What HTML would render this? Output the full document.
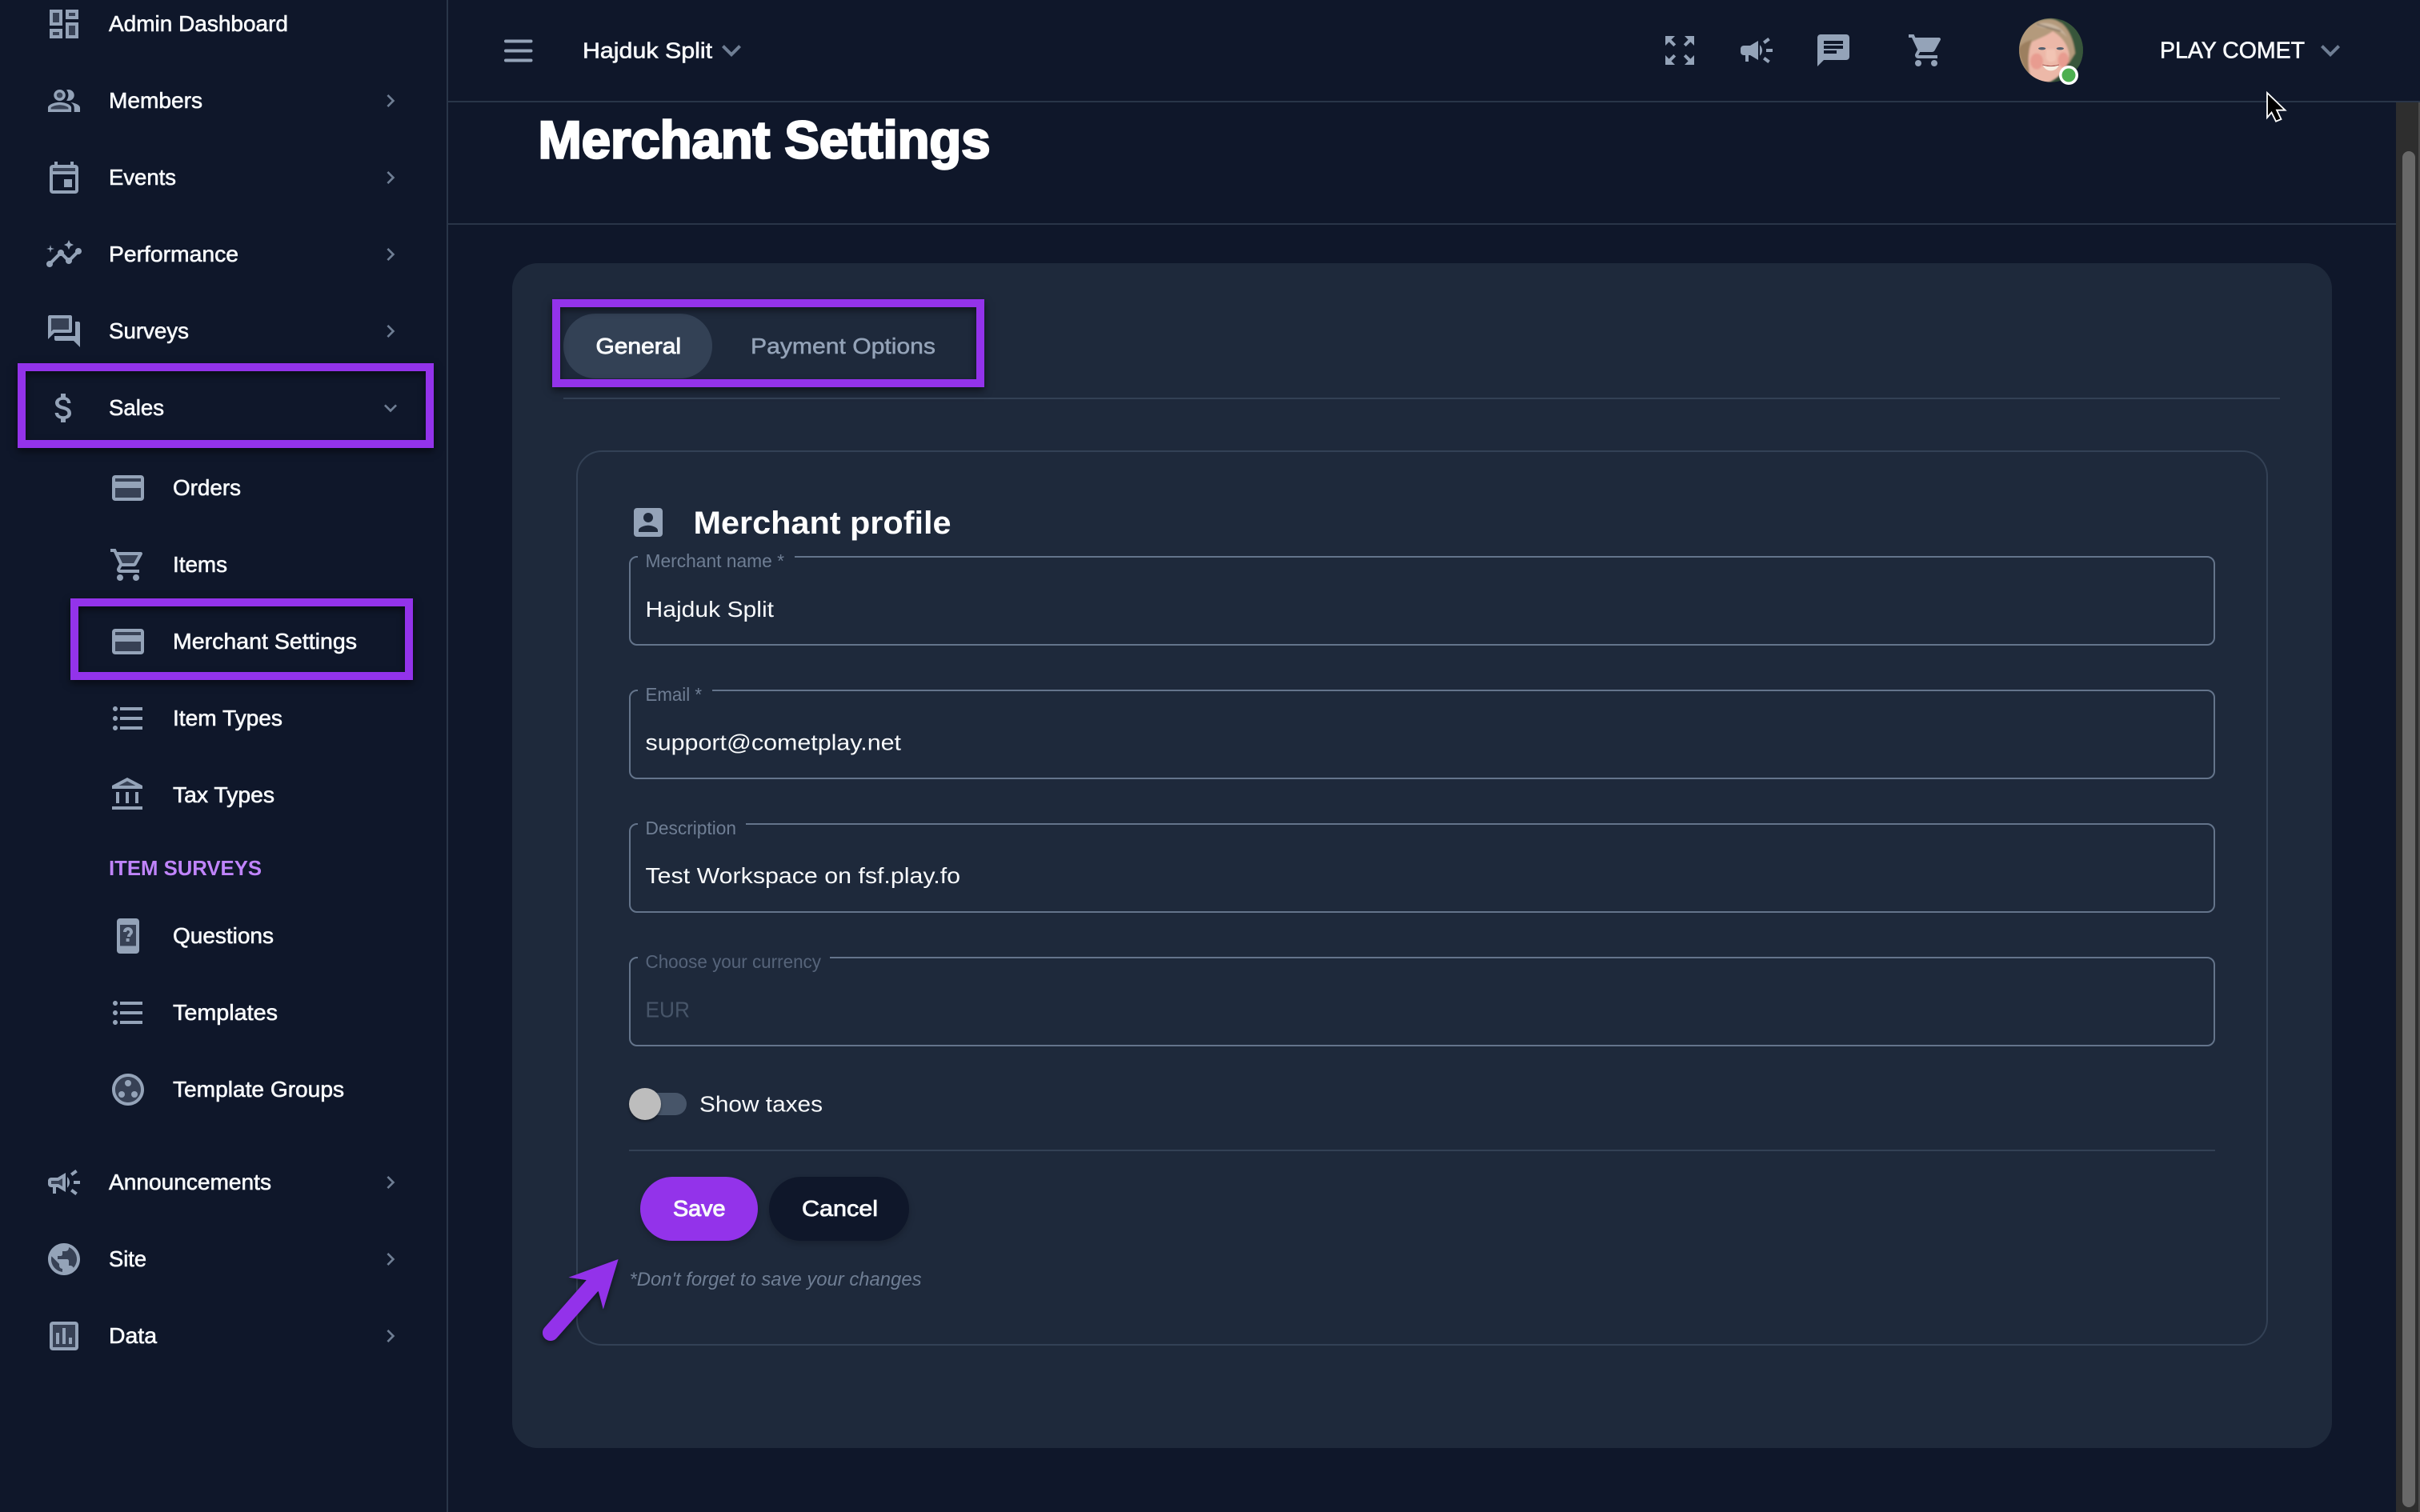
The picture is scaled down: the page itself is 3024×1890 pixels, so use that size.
<!DOCTYPE html>
<html lang="en">
<head>
<meta charset="utf-8">
<title>Merchant Settings</title>
<style>
html,body{margin:0;padding:0;width:3024px;height:1890px;overflow:hidden;background:#0f172a;font-family:"Liberation Sans",sans-serif}
.a{position:absolute;box-sizing:border-box}
svg{position:absolute;left:0;top:0}
text{font-family:"Liberation Sans",sans-serif}
.m{fill:#f8fafc;stroke:#f8fafc;stroke-width:.6;font-size:28px}
.ic{fill:#94a3b8}
.o3{opacity:.3}
.ch{fill:#6f7e94}
.hl{border:10px solid #9333ea;box-shadow:0 4px 9px rgba(0,0,0,.55),inset 0 4px 9px rgba(0,0,0,.5)}
.fld{border:2px solid #64748b;border-radius:10px;left:786px;width:1982px;height:112px}
.gap{background:#1e293b;height:4px;top:-3px}
</style>
</head>
<body>
<!-- sidebar / header chrome -->
<div class="a" style="left:558px;top:0;width:2px;height:1890px;background:#293548"></div>
<div class="a" style="left:560px;top:126px;width:2464px;height:2px;background:#293548"></div>
<div class="a" style="left:560px;top:279px;width:2434px;height:2px;background:#293548"></div>
<!-- scrollbar -->
<div class="a" style="left:2994px;top:128px;width:30px;height:1762px;background:#2e2e2e;border-right:2px solid #4a4a4a"></div>
<div class="a" style="left:3002px;top:189px;width:16px;height:1695px;background:#686868;border-radius:8px"></div>
<!-- card -->
<div class="a" style="left:640px;top:329px;width:2274px;height:1481px;background:#1e293b;border-radius:32px"></div>
<div class="a" style="left:704px;top:392px;width:186px;height:81px;background:#334155;border-radius:40px"></div>
<div class="a" style="left:704px;top:497px;width:2145px;height:2px;background:#334155"></div>
<div class="a" style="left:720px;top:563px;width:2114px;height:1119px;border:2px solid #334155;border-radius:32px"></div>
<!-- fields -->
<div class="a fld" style="top:695px"><div class="a gap" style="left:9px;width:196px"></div></div>
<div class="a fld" style="top:862px"><div class="a gap" style="left:9px;width:93px"></div></div>
<div class="a fld" style="top:1029px"><div class="a gap" style="left:9px;width:135px"></div></div>
<div class="a fld" style="top:1196px"><div class="a gap" style="left:9px;width:240px"></div></div>
<!-- toggle -->
<div class="a" style="left:792px;top:1366px;width:66px;height:28px;background:#475569;border-radius:14px"></div>
<div class="a" style="left:786px;top:1360px;width:40px;height:40px;background:#bdbdbd;border-radius:50%;box-shadow:0 2px 3px rgba(0,0,0,.4)"></div>
<div class="a" style="left:786px;top:1437px;width:1982px;height:2px;background:#334155"></div>
<!-- buttons -->
<div class="a" style="left:800px;top:1471px;width:147px;height:80px;background:#9333ea;border-radius:40px;box-shadow:0 4px 8px rgba(0,0,0,.2)"></div>
<div class="a" style="left:961px;top:1471px;width:175px;height:80px;background:#0f172a;border-radius:40px;box-shadow:0 4px 8px rgba(0,0,0,.2)"></div>
<!-- highlight boxes -->
<div class="a hl" style="left:22px;top:454px;width:520px;height:106px"></div>
<div class="a hl" style="left:88px;top:748px;width:428px;height:102px"></div>
<div class="a hl" style="left:690px;top:374px;width:540px;height:110px"></div>

<svg width="3024" height="1890" viewBox="0 0 3024 1890" xmlns="http://www.w3.org/2000/svg">
<defs>
<path id="cr" d="M10 6 8.59 7.41 13.17 12l-4.58 4.59L10 18l6-6z"/>
<path id="ex" d="M16.59 8.59 12 13.17 7.41 8.59 6 10l6 6 6-6z"/>
<g id="card"><path class="o3" d="M4 12h16v6H4zM4 6h16v2H4z"/><path fill-rule="evenodd" d="M20 4H4c-1.11 0-1.99.89-1.99 2L2 18c0 1.11.89 2 2 2h16c1.11 0 2-.9 2-2V6c0-1.11-.89-2-2-2zm0 14H4v-6h16v6zm0-10H4V6h16v2z"/></g>
<path id="lst" d="M4 10.5c-.83 0-1.5.67-1.5 1.5s.67 1.5 1.5 1.5 1.5-.67 1.5-1.5-.67-1.5-1.5-1.5zm0-6c-.83 0-1.5.67-1.5 1.5S3.17 7.5 4 7.5 5.5 6.83 5.5 6 4.83 4.5 4 4.5zm0 12c-.83 0-1.5.68-1.5 1.5s.68 1.5 1.5 1.5 1.5-.68 1.5-1.5-.67-1.5-1.5-1.5zM7 19h14v-2H7v2zm0-6h14v-2H7v2zm0-8v2h14V5H7z"/>
<clipPath id="av"><circle cx="2563" cy="62.7" r="40"/></clipPath>
<filter id="bl" x="-20%" y="-20%" width="140%" height="140%"><feGaussianBlur stdDeviation="3"/></filter>
<filter id="ds" x="-30%" y="-30%" width="160%" height="160%"><feDropShadow dx="0" dy="3" stdDeviation="4" flood-color="#000" flood-opacity=".5"/></filter>
</defs>

<!-- sidebar icons -->
<g class="ic">
<g transform="translate(56,6) scale(2)"><path class="o3" d="M5 5h4v6H5zm10 8h4v6h-4zM5 17h4v2H5zM15 5h4v2h-4z"/><path d="M3 13h8V3H3v10zm2-8h4v6H5V5zm8 16h8V11h-8v10zm2-8h4v6h-4v-6zM13 3v6h8V3h-8zm6 4h-4V5h4v2zM3 21h8v-6H3v6zm2-4h4v2H5v-2z"/></g>
<g transform="translate(80,126) scale(1.82,1.75) translate(-12,-12)"><path class="o3" d="M9 8m-2 0a2 2 0 1 0 4 0 2 2 0 1 0-4 0M9 15c-2.7 0-5.8 1.29-6 2.01V18h12v-1c-.2-.71-3.3-2-6-2z"/><path d="M16.67 13.13C18.04 14.06 19 15.32 19 17v3h4v-3c0-2.18-3.57-3.47-6.33-3.87zM15 12c2.21 0 4-1.79 4-4s-1.79-4-4-4c-.47 0-.91.1-1.33.24C14.5 5.27 15 6.58 15 8s-.5 2.73-1.33 3.76c.42.14.86.24 1.33.24zM9 12c2.21 0 4-1.79 4-4s-1.79-4-4-4-4 1.79-4 4 1.79 4 4 4zm0-6c1.1 0 2 .9 2 2s-.9 2-2 2-2-.9-2-2 .9-2 2-2zM9 13c-2.67 0-8 1.34-8 4v3h16v-3c0-2.66-5.33-4-8-4zm6 5H3v-.99C3.2 16.29 6.3 15 9 15s5.8 1.29 6 2v1z"/></g>
<g transform="translate(56,200) scale(2)"><path class="o3" d="M5 5h14v2H5z"/><path d="M19 3h-1V1h-2v2H8V1H6v2H5c-1.1 0-2 .9-2 2v14c0 1.1.9 2 2 2h14c1.1 0 2-.9 2-2V5c0-1.1-.9-2-2-2zm0 16H5V9h14v10zm0-12H5V5h14v2zm-7 5h5v5h-5z"/></g>
<g transform="translate(56,294) scale(2)"><path d="M21 8c-1.45 0-2.26 1.44-1.93 2.51l-3.55 3.56c-.3-.09-.74-.09-1.04 0l-2.55-2.55C12.27 10.45 11.46 9 10 9c-1.45 0-2.27 1.44-1.93 2.52l-4.56 4.55C2.44 15.74 1 16.55 1 18c0 1.1.9 2 2 2 1.45 0 2.26-1.44 1.93-2.51l4.55-4.56c.3.09.74.09 1.04 0l2.55 2.55C12.73 16.55 13.54 18 15 18c1.45 0 2.27-1.44 1.93-2.52l3.56-3.55c1.07.33 2.51-.48 2.51-1.93 0-1.1-.9-2-2-2z"/><polygon points="15,9 15.94,6.93 18,6 15.94,5.07 15,3 14.08,5.07 12,6 14.08,6.93"/><polygon points="3.5,11 4,9 6,8.5 4,8 3.5,6 3,8 1,8.5 3,9"/></g>
<g transform="translate(56,390) scale(2)"><path class="o3" d="M15 11V4H4v8.17l.59-.58.58-.59H6z"/><path d="M21 6h-2v9H6v2c0 .55.45 1 1 1h11l4 4V7c0-.55-.45-1-1-1zm-5 7c.55 0 1-.45 1-1V3c0-.55-.45-1-1-1H3c-.55 0-1 .45-1 1v14l4-4h10zM4.59 11.59l-.59.58V4h11v7H5.17l-.58.59z"/></g>
<g transform="translate(56,486) scale(2)"><path d="M11.8 10.9c-2.27-.59-3-1.2-3-2.15 0-1.09 1.01-1.85 2.7-1.85 1.78 0 2.44.85 2.5 2.1h2.21c-.07-1.72-1.12-3.3-3.21-3.81V3h-3v2.16c-1.94.42-3.5 1.68-3.5 3.61 0 2.31 1.91 3.46 4.7 4.13 2.5.6 3 1.48 3 2.41 0 .69-.49 1.79-2.7 1.79-2.06 0-2.87-.92-2.98-2.1h-2.2c.12 2.19 1.76 3.42 3.68 3.83V21h3v-2.15c1.95-.37 3.5-1.5 3.5-3.55 0-2.84-2.43-3.81-4.7-4.4z"/></g>
<use href="#card" transform="translate(136,586) scale(2)"/>
<g transform="translate(136,682) scale(2)"><path class="o3" d="M15.55 11l2.76-5H6.16l2.37 5z"/><path d="M15.55 13c.75 0 1.41-.41 1.75-1.03l3.58-6.49c.37-.66-.11-1.48-.87-1.48H5.21l-.94-2H1v2h2l3.6 7.59-1.35 2.44C4.52 15.37 5.48 17 7 17h12v-2H7l1.1-2h7.45zM6.16 6h12.15l-2.76 5H8.53L6.16 6zM7 18c-1.1 0-1.99.9-1.99 2S5.9 22 7 22s2-.9 2-2-.9-2-2-2zm10 0c-1.1 0-1.99.9-1.99 2s.89 2 1.99 2 2-.9 2-2-.9-2-2-2z"/></g>
<use href="#card" transform="translate(136,778) scale(2)"/>
<use href="#lst" transform="translate(136,874) scale(2)"/>
<g transform="translate(136,970) scale(2)"><path class="o3" d="M6.29 6l5.21-2.74L16.71 6z"/><path d="M6.5 10h-2v7h2v-7zm6 0h-2v7h2v-7zm8.5 9H2v2h19v-2zm-2.5-9h-2v7h2v-7zm-7-9L2 6v2h19V6l-9.5-5zM6.29 6l5.21-2.74L16.71 6H6.29z"/></g>
<g transform="translate(136,1146) scale(2)"><path class="o3" d="M7 5h10v13.2H7z"/><path fill-rule="evenodd" d="M17 1H7C5.9 1 5 1.9 5 3v18c0 1.1.9 2 2 2h10c1.1 0 2-.9 2-2V3c0-1.1-.9-2-2-2zM7 5h10v13.2H7z"/><path d="M12 6.5c-1.66 0-3 1.34-3 3h2c0-.55.45-1 1-1s1 .45 1 1c0 1-1.5 1-1.5 3h2c0-1.21 1.5-1.5 1.5-3 0-1.66-1.34-3-3-3zm-1.2 7h2v2h-2z"/></g>
<use href="#lst" transform="translate(136,1242) scale(2)"/>
<g transform="translate(136,1338) scale(2)"><path class="o3" d="M12 4c-4.41 0-8 3.59-8 8s3.59 8 8 8 8-3.59 8-8-3.59-8-8-8z"/><path d="M12 2C6.48 2 2 6.48 2 12s4.48 10 10 10 10-4.48 10-10S17.52 2 12 2zm0 18c-4.41 0-8-3.59-8-8s3.59-8 8-8 8 3.59 8 8-3.59 8-8 8z"/><circle cx="8" cy="15" r="2"/><circle cx="12" cy="8" r="2"/><circle cx="16" cy="15" r="2"/></g>
<g transform="translate(56,1454) scale(2)"><path class="o3" d="M9.03 10.71L11 9.53v4.94l-1.97-1.18-.48-.29H4v-2h4.55z"/><path d="M18 11v2h4v-2h-4zm-2 6.61c.96.71 2.21 1.65 3.2 2.39.4-.53.8-1.07 1.2-1.6-.99-.74-2.24-1.68-3.2-2.4-.4.54-.8 1.08-1.2 1.61zM20.4 5.6c-.4-.53-.8-1.07-1.2-1.6-.99.74-2.24 1.68-3.2 2.4.4.53.8 1.07 1.2 1.6.96-.72 2.21-1.65 3.2-2.4zM4 9c-1.1 0-2 .9-2 2v2c0 1.1.9 2 2 2h1v4h2v-4h1l5 3V6L8 9H4zm5.03 1.71L11 9.53v4.94l-1.97-1.18-.48-.29H4v-2h4.55l.48-.29zM15.5 12c0-1.33-.58-2.53-1.5-3.35v6.69c.92-.81 1.5-2.01 1.5-3.34z"/></g>
<g transform="translate(56,1550) scale(2)"><path class="o3" d="M14.99 4.59V5c0 1.1-.9 2-2 2h-2v2c0 .55-.45 1-1 1h-2v2h6c.55 0 1 .45 1 1v3h1c.89 0 1.64.59 1.9 1.4C19.19 16.98 20 14.58 20 12c0-3.35-2.08-6.23-5.01-7.41zM8.99 16v-1l-4.78-4.78C4.08 10.79 4 11.38 4 12c0 4.08 3.05 7.44 7 7.93V18c-1.1 0-2.01-.9-2.01-2z"/><path d="M12 2C6.48 2 2 6.48 2 12s4.48 10 10 10 10-4.48 10-10S17.52 2 12 2zm-1 17.93c-3.95-.49-7-3.85-7-7.93 0-.62.08-1.21.21-1.79L9 15v1c0 1.1.9 2 2 2v1.93zm6.9-2.54c-.26-.81-1-1.39-1.9-1.39h-1v-3c0-.55-.45-1-1-1H8v-2h2c.55 0 1-.45 1-1V7h2c1.1 0 2-.9 2-2v-.41C17.92 5.77 20 8.65 20 12c0 2.08-.8 3.97-2.1 5.39z"/></g>
<g transform="translate(56,1646) scale(2)"><path class="o3" d="M5 5v14h14V5H5zm4 12H7v-7h2v7zm4 0h-2V7h2v10zm4 0h-2v-4h2v4z"/><path d="M3 5v14c0 1.1.9 2 2 2h14c1.1 0 2-.9 2-2V5c0-1.1-.9-2-2-2H5c-1.1 0-2 .9-2 2zm2 0h14v14H5V5zm2 5h2v7H7zm4-3h2v10h-2zm4 6h2v4h-2z"/></g>
</g>

<!-- sidebar chevrons -->
<g class="ch">
<use href="#cr" transform="translate(472,110) scale(1.333)"/>
<use href="#cr" transform="translate(472,206) scale(1.333)"/>
<use href="#cr" transform="translate(472,302) scale(1.333)"/>
<use href="#cr" transform="translate(472,398) scale(1.333)"/>
<use href="#ex" transform="translate(472,494) scale(1.333)"/>
<use href="#cr" transform="translate(472,1462) scale(1.333)"/>
<use href="#cr" transform="translate(472,1558) scale(1.333)"/>
<use href="#cr" transform="translate(472,1654) scale(1.333)"/>
</g>

<!-- sidebar text -->
<g>
<text class="m" x="136" y="39" textLength="224" lengthAdjust="spacingAndGlyphs">Admin Dashboard</text>
<text class="m" x="136" y="135" textLength="117" lengthAdjust="spacingAndGlyphs">Members</text>
<text class="m" x="136" y="231" textLength="84" lengthAdjust="spacingAndGlyphs">Events</text>
<text class="m" x="136" y="327" textLength="162" lengthAdjust="spacingAndGlyphs">Performance</text>
<text class="m" x="136" y="423" textLength="100" lengthAdjust="spacingAndGlyphs">Surveys</text>
<text class="m" x="136" y="519" textLength="69" lengthAdjust="spacingAndGlyphs">Sales</text>
<text class="m" x="216" y="619" textLength="85" lengthAdjust="spacingAndGlyphs">Orders</text>
<text class="m" x="216" y="715" textLength="68" lengthAdjust="spacingAndGlyphs">Items</text>
<text class="m" x="216" y="811" textLength="230" lengthAdjust="spacingAndGlyphs">Merchant Settings</text>
<text class="m" x="216" y="907" textLength="137" lengthAdjust="spacingAndGlyphs">Item Types</text>
<text class="m" x="216" y="1003" textLength="127" lengthAdjust="spacingAndGlyphs">Tax Types</text>
<text x="136" y="1094" font-size="26" font-weight="700" fill="#c084fc" textLength="191" lengthAdjust="spacingAndGlyphs">ITEM SURVEYS</text>
<text class="m" x="216" y="1179" textLength="126" lengthAdjust="spacingAndGlyphs">Questions</text>
<text class="m" x="216" y="1275" textLength="131" lengthAdjust="spacingAndGlyphs">Templates</text>
<text class="m" x="216" y="1371" textLength="214" lengthAdjust="spacingAndGlyphs">Template Groups</text>
<text class="m" x="136" y="1487" textLength="203" lengthAdjust="spacingAndGlyphs">Announcements</text>
<text class="m" x="136" y="1583" textLength="47" lengthAdjust="spacingAndGlyphs">Site</text>
<text class="m" x="136" y="1679" textLength="60" lengthAdjust="spacingAndGlyphs">Data</text>
</g>

<!-- header -->
<g class="ic">
<rect x="630" y="49.5" width="35.5" height="4" rx="2"/><rect x="630" y="61.5" width="35.5" height="4" rx="2"/><rect x="630" y="73.5" width="35.5" height="4" rx="2"/>
<path transform="translate(2075,39) scale(2)" d="M15 3l2.3 2.3-2.89 2.87 1.42 1.42L18.7 6.7 21 9V3h-6zM3 9l2.3-2.3 2.87 2.89 1.42-1.42L6.7 5.3 9 3H3v6zm6 12l-2.3-2.3 2.89-2.87-1.42-1.42L5.3 17.3 3 15v6h6zm12-6l-2.3 2.3-2.87-2.89-1.42 1.42 2.89 2.87L15 21h6v-6z"/>
<path transform="translate(2171,39) scale(2)" d="M18 11v2h4v-2h-4zm-2 6.61c.96.71 2.21 1.65 3.2 2.39.4-.53.8-1.07 1.2-1.6-.99-.74-2.24-1.68-3.2-2.4-.4.54-.8 1.08-1.2 1.61zM20.4 5.6c-.4-.53-.8-1.07-1.2-1.6-.99.74-2.24 1.68-3.2 2.4.4.53.8 1.07 1.2 1.6.96-.72 2.21-1.65 3.2-2.4zM4 9c-1.1 0-2 .9-2 2v2c0 1.1.9 2 2 2h1v4h2v-4h1l5 3V6L8 9H4zm11.5 3c0-1.33-.58-2.53-1.5-3.35v6.69c.92-.81 1.5-2.01 1.5-3.34z"/>
<path transform="translate(2267,39) scale(2)" d="M20 2H4c-1.1 0-1.99.9-1.99 2L2 22l4-4h14c1.1 0 2-.9 2-2V4c0-1.1-.9-2-2-2zM6 9h12v2H6V9zm8 5H6v-2h8v2zm4-6H6V6h12v2z"/>
<path transform="translate(2383,39) scale(2)" d="M7 18c-1.1 0-1.99.9-1.99 2S5.9 22 7 22s2-.9 2-2-.9-2-2-2zM1 2v2h2l3.6 7.59-1.35 2.45c-.16.28-.25.61-.25.96 0 1.1.9 2 2 2h12v-2H7.42c-.14 0-.25-.11-.25-.25l.03-.12.9-1.63h7.45c.75 0 1.41-.41 1.75-1.03l3.58-6.49c.08-.14.12-.31.12-.48 0-.55-.45-1-1-1H5.21l-.94-2H1zm16 16c-1.1 0-1.99.9-1.99 2s.89 2 1.99 2 2-.9 2-2-.9-2-2-2z"/>
</g>
<use href="#ex" class="ch" transform="translate(890,39) scale(2)"/>
<use href="#ex" class="ch" transform="translate(2888,39) scale(2)"/>
<text class="m" x="728" y="72.5" textLength="162" lengthAdjust="spacingAndGlyphs">Hajduk Split</text>
<text class="m" x="2699" y="72.5" style="font-size:29px" textLength="181" lengthAdjust="spacingAndGlyphs">PLAY COMET</text>

<!-- avatar -->
<g clip-path="url(#av)">
<g transform="translate(2515,15) scale(.3333)">
<rect x="15" y="15" width="260" height="260" fill="#2f4a34"/>
<g filter="url(#bl)">
<path d="M180 25L265 60V200L215 215Z" fill="#38563a"/>
<path d="M20 270V130C25 70 75 25 140 25C195 28 228 90 234 155L212 190L70 262Z" fill="#b49a7c"/>
<path d="M22 140C30 180 45 225 72 250L62 170C58 140 65 120 72 105C50 110 30 120 22 140Z" fill="#9c7f5f"/>
<path d="M85 48C120 34 175 40 205 95C180 70 150 58 120 60C105 58 92 54 85 48Z" fill="#c9b6a0"/>
<path d="M90 46L180 72" stroke="#7d6c5b" stroke-width="5" fill="none"/>
<path d="M72 112C100 98 130 88 150 72C185 92 208 125 212 160C210 210 172 250 135 264L72 268C58 220 52 160 72 112Z" fill="#ecb8a8"/>
<ellipse cx="90" cy="185" rx="24" ry="30" fill="#e89c90"/>
<ellipse cx="190" cy="180" rx="20" ry="28" fill="#e89c90"/>
<path d="M125 140C125 170 120 185 145 188C170 185 162 170 160 140Z" fill="#f2c4b4"/>
</g>
<ellipse cx="110" cy="137" rx="14" ry="5" fill="#56606e"/>
<ellipse cx="178" cy="137" rx="14" ry="5" fill="#56606e"/>
<path d="M112 198Q143 208 174 198Q165 220 143 220Q122 220 112 198Z" fill="#f7eee2"/>
<path d="M112 198Q143 208 174 198" stroke="#a8544e" stroke-width="3" fill="none"/>
</g>
</g>
<circle cx="2585" cy="94" r="12" fill="#fff"/>
<circle cx="2585" cy="94" r="8.5" fill="#4caf50"/>

<!-- cursor -->
<path d="M2833 116V147L2838.5 140.5L2844 151.7L2850.5 149L2845 137.7H2855.5Z" fill="#000" stroke="#fff" stroke-width="1.8" stroke-linejoin="miter"/>

<!-- page title -->
<text x="672.5" y="197.5" font-size="66" font-weight="700" fill="#fff" stroke="#fff" stroke-width="2.6" textLength="565" lengthAdjust="spacingAndGlyphs">Merchant Settings</text>

<!-- tabs -->
<text class="m" x="744.5" y="442" style="stroke-width:.9" textLength="106.5" lengthAdjust="spacingAndGlyphs">General</text>
<text x="938" y="442" font-size="28" fill="#94a3b8" stroke="#94a3b8" stroke-width=".5" textLength="231" lengthAdjust="spacingAndGlyphs">Payment Options</text>

<!-- profile heading -->
<path class="ic" transform="translate(786,629) scale(2)" d="M3 5v14c0 1.1.89 2 2 2h14c1.1 0 2-.9 2-2V5c0-1.1-.9-2-2-2H5c-1.11 0-2 .9-2 2zm12 4c0 1.66-1.34 3-3 3s-3-1.34-3-3 1.34-3 3-3 3 1.34 3 3zm-9 8c0-2 4-3.1 6-3.1s6 1.1 6 3.1v1H6v-1z"/>
<text x="866.5" y="667" font-size="40" font-weight="700" fill="#fff" textLength="322" lengthAdjust="spacingAndGlyphs">Merchant profile</text>

<!-- field text -->
<g font-size="23.5" fill="#6f7e94">
<text x="806.5" y="709" textLength="173.5" lengthAdjust="spacingAndGlyphs">Merchant name *</text>
<text x="806.5" y="876" textLength="70.5" lengthAdjust="spacingAndGlyphs">Email *</text>
<text x="806.5" y="1043" textLength="113.5" lengthAdjust="spacingAndGlyphs">Description</text>
<text x="806.5" y="1210" fill="#56647a" textLength="219.5" lengthAdjust="spacingAndGlyphs">Choose your currency</text>
</g>
<g font-size="28" fill="#f8fafc">
<text x="806.5" y="771" textLength="160.5" lengthAdjust="spacingAndGlyphs">Hajduk Split</text>
<text x="806.5" y="937.5" textLength="319.5" lengthAdjust="spacingAndGlyphs">support@cometplay.net</text>
<text x="806.5" y="1104" textLength="393.5" lengthAdjust="spacingAndGlyphs">Test Workspace on fsf.play.fo</text>
<text x="806.5" y="1271.5" fill="#475569" textLength="55.5" lengthAdjust="spacingAndGlyphs">EUR</text>
<text x="874" y="1389.5" textLength="154" lengthAdjust="spacingAndGlyphs">Show taxes</text>
</g>

<!-- buttons text -->
<text class="m" x="841" y="1520" style="stroke-width:1" textLength="65.5" lengthAdjust="spacingAndGlyphs">Save</text>
<text class="m" x="1002" y="1520" style="stroke-width:.8" textLength="95" lengthAdjust="spacingAndGlyphs">Cancel</text>
<text x="786.5" y="1607" font-size="24" font-style="italic" fill="#6f7e94" textLength="365" lengthAdjust="spacingAndGlyphs">*Don't forget to save your changes</text>

<!-- purple arrow -->
<g filter="url(#ds)">
<path d="M688 1666L741 1606" stroke="#9333ea" stroke-width="20" stroke-linecap="round" fill="none"/>
<path d="M772.6 1574L710.5 1596.7L732.4 1600L748 1614.6L753.8 1636.6Z" fill="#9333ea"/>
</g>
</svg>
</body>
</html>
